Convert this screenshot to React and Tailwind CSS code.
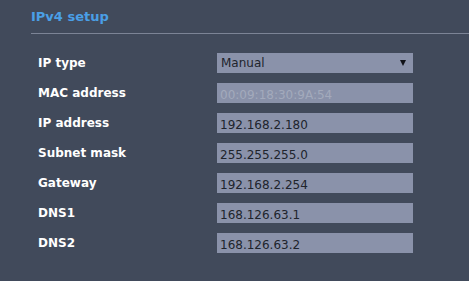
import React from "react";

const rows = [
  { label: "IP type", value: "Manual", select: true },
  { label: "MAC address", value: "00:09:18:30:9A:54", disabled: true },
  { label: "IP address", value: "192.168.2.180" },
  { label: "Subnet mask", value: "255.255.255.0" },
  { label: "Gateway", value: "192.168.2.254" },
  { label: "DNS1", value: "168.126.63.1" },
  { label: "DNS2", value: "168.126.63.2" },
];

export default function App() {
  return (
    <div
      className="w-[469px] h-[281px] bg-[#414a5b] overflow-hidden"
      style={{ fontFamily: '"DejaVu Sans", Verdana, sans-serif' }}
    >
      <div className="pl-[31px] pt-[9px]">
        <div className="text-[13px] font-bold text-[#4a9fe6] leading-[16px] h-[24px]">IPv4 setup</div>
        <div className="h-px bg-[#7c8496]" />
      </div>
      <div className="pl-[38px] pt-[19px] flex flex-col gap-[10px]">
        {rows.map((r) => (
          <div key={r.label} className="flex items-center h-[20px]">
            <div className="w-[179px] text-[12px] font-bold text-white leading-none">{r.label}</div>
            {r.select ? (
              <div className="w-[196px] h-[20px] bg-[#8a92aa] flex items-center justify-between pl-[4px] pr-[7px]">
                <span className="text-[12px] leading-none text-[#20242c]">{r.value}</span>
                <svg width="6" height="6" viewBox="0 0 6 6">
                  <path d="M0 0 H6 L3 6 Z" fill="#101218" />
                </svg>
              </div>
            ) : (
              <div className="w-[196px] h-[20px] bg-[#8a92aa] flex items-center pl-[3px] pt-[3px]">
                <span
                  className={
                    "text-[12px] leading-none " + (r.disabled ? "text-[#a3aabc]" : "text-[#20242c]")
                  }
                >
                  {r.value}
                </span>
              </div>
            )}
          </div>
        ))}
      </div>
    </div>
  );
}
